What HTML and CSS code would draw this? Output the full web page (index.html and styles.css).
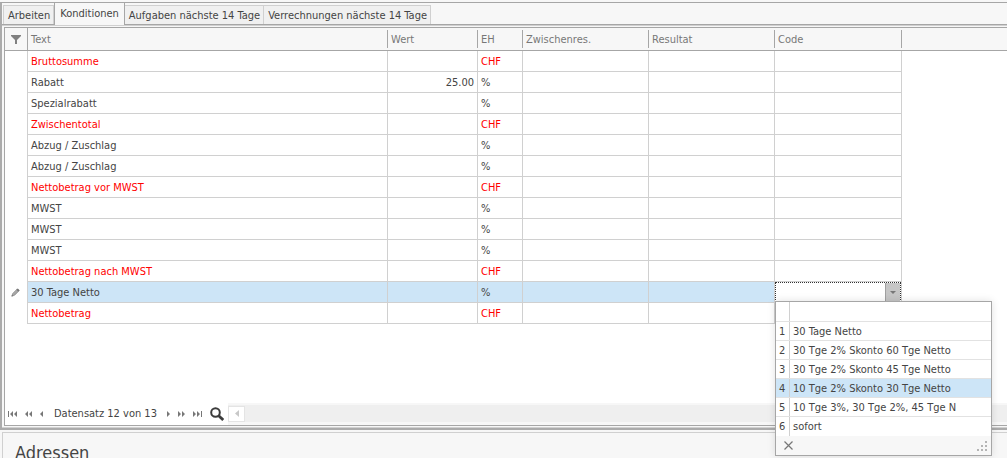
FILE: index.html
```html
<!DOCTYPE html>
<html lang="de">
<head>
<meta charset="utf-8">
<title>Konditionen</title>
<link rel="stylesheet" href="styles.css">
</head>
<body>
<main class="tab-control">
  <div class="tabs" role="tablist">
    <button class="tab" role="tab">Arbeiten</button>
    <button class="tab tab-active" role="tab" aria-selected="true">Konditionen</button>
    <button class="tab" role="tab">Aufgaben nächste 14 Tage</button>
    <button class="tab" role="tab">Verrechnungen nächste 14 Tage</button>
  </div>
  <div class="page">
    <section class="grid">
      <div class="grid-body">
        <table class="records">
          <colgroup>
            <col class="col-mark"><col class="col-text"><col class="col-wert"><col class="col-eh"><col class="col-mid"><col class="col-mid"><col class="col-code"><col>
          </colgroup>
          <thead>
            <tr>
              <th class="mark"><svg class="icon" width="10" height="9" viewBox="0 0 10 9" aria-label="Filter"><path fill="#808080" d="M0 0h10v1L6 5v4H4V5L0 1z"/></svg></th>
              <th>Text</th><th>Wert</th><th>EH</th><th>Zwischenres.</th><th>Resultat</th><th>Code</th><th></th>
            </tr>
          </thead>
          <tbody>
            <tr class="total"><td></td><td>Bruttosumme</td><td></td><td>CHF</td><td></td><td></td><td></td><td></td></tr>
            <tr><td></td><td>Rabatt</td><td class="number">25.00</td><td>%</td><td></td><td></td><td></td><td></td></tr>
            <tr><td></td><td>Spezialrabatt</td><td></td><td>%</td><td></td><td></td><td></td><td></td></tr>
            <tr class="total"><td></td><td>Zwischentotal</td><td></td><td>CHF</td><td></td><td></td><td></td><td></td></tr>
            <tr><td></td><td>Abzug / Zuschlag</td><td></td><td>%</td><td></td><td></td><td></td><td></td></tr>
            <tr><td></td><td>Abzug / Zuschlag</td><td></td><td>%</td><td></td><td></td><td></td><td></td></tr>
            <tr class="total"><td></td><td>Nettobetrag vor MWST</td><td></td><td>CHF</td><td></td><td></td><td></td><td></td></tr>
            <tr><td></td><td>MWST</td><td></td><td>%</td><td></td><td></td><td></td><td></td></tr>
            <tr><td></td><td>MWST</td><td></td><td>%</td><td></td><td></td><td></td><td></td></tr>
            <tr><td></td><td>MWST</td><td></td><td>%</td><td></td><td></td><td></td><td></td></tr>
            <tr class="total"><td></td><td>Nettobetrag nach MWST</td><td></td><td>CHF</td><td></td><td></td><td></td><td></td></tr>
            <tr class="current">
              <td class="mark"><svg class="icon" width="9" height="9" viewBox="0 0 10 10" aria-label="Bearbeiten"><path fill="#a8a8a8" stroke="#858585" stroke-width=".8" d="M1 9l1-3 5-5 2 2-5 5z"/><path fill="#777" d="M6 2l1.500-1.500L9.500 2.500 8 4zM0.500 9.500l.7-2 1.300 1.300z"/></svg></td>
              <td>30 Tage Netto</td><td></td><td>%</td><td></td><td></td>
              <td class="edit-cell">
                <div class="editor">
                  <input class="editor-input" type="text" role="combobox" aria-label="Code" aria-expanded="true" aria-controls="codes">
                  <button class="editor-button" aria-label="Liste öffnen"><svg width="6" height="3" viewBox="0 0 6 3"><path fill="#777" d="M0 0h6L3 3z"/></svg></button>
                </div>
                <div class="popup">
                  <ul class="options" id="codes" role="listbox" aria-label="Code">
                    <li class="option option-head"><span class="option-key"></span><span class="option-text"></span></li>
                    <li class="option" role="option"><span class="option-key">1</span><span class="option-text">30 Tage Netto</span></li>
                    <li class="option" role="option"><span class="option-key">2</span><span class="option-text">30 Tge 2% Skonto 60 Tge Netto</span></li>
                    <li class="option" role="option"><span class="option-key">3</span><span class="option-text">30 Tge 2% Skonto 45 Tge Netto</span></li>
                    <li class="option option-active" role="option" aria-selected="true"><span class="option-key">4</span><span class="option-text">10 Tge 2% Skonto 30 Tge Netto</span></li>
                    <li class="option" role="option"><span class="option-key">5</span><span class="option-text">10 Tge 3%, 30 Tge 2%, 45 Tge N</span></li>
                    <li class="option" role="option"><span class="option-key">6</span><span class="option-text">sofort</span></li>
                  </ul>
                  <div class="popup-footer">
                    <button class="plain" aria-label="Schliessen"><svg class="icon" width="9" height="9" viewBox="0 0 9 9"><path stroke="#777" stroke-width="1.200" d="M.5.5l8 8M8.500.5l-8 8"/></svg></button>
                    <svg class="icon" width="10" height="10" viewBox="0 0 10 10"><path fill="#b4b4b4" d="M8 0h2v2H8zM4 4h2v2H4zM8 4h2v2H8zM0 8h2v2H0zM4 8h2v2H4zM8 8h2v2H8z"/></svg>
                  </div>
                </div>
              </td>
              <td></td>
            </tr>
            <tr class="total"><td></td><td>Nettobetrag</td><td></td><td>CHF</td><td></td><td></td><td></td><td></td></tr>
          </tbody>
        </table>
      </div>
      <footer class="grid-footer">
        <nav class="navigator">
          <button class="nav-button" aria-label="Erster"><svg class="icon" width="10" height="6" viewBox="0 0 10 6"><path fill="#777" d="M0 0h1v6H0zM5 0v6L2 3zM9 0v6L6 3z"/></svg></button>
          <button class="nav-button" aria-label="Seite zurück"><svg class="icon" width="8" height="6" viewBox="0 0 8 6"><path fill="#777" d="M3 0v6L0 3zM7 0v6L4 3z"/></svg></button>
          <button class="nav-button" aria-label="Zurück"><svg class="icon" width="4" height="6" viewBox="0 0 4 6"><path fill="#777" d="M3 0v6L0 3z"/></svg></button>
          <span class="position">Datensatz 12 von 13</span>
          <button class="nav-button" aria-label="Weiter"><svg class="icon" width="4" height="6" viewBox="0 0 4 6"><path fill="#777" d="M0 0v6l3-3z"/></svg></button>
          <button class="nav-button" aria-label="Seite weiter"><svg class="icon" width="8" height="6" viewBox="0 0 8 6"><path fill="#777" d="M0 0v6l3-3zM4 0v6l3-3z"/></svg></button>
          <button class="nav-button" aria-label="Letzter"><svg class="icon" width="10" height="6" viewBox="0 0 10 6"><path fill="#777" d="M0 0v6l3-3zM4 0v6l3-3zM8 0h1v6H8z"/></svg></button>
          <button class="nav-search" aria-label="Suchen"><svg class="icon" width="14" height="14" viewBox="0 0 14 14"><circle cx="5.500" cy="5.500" r="4.300" fill="none" stroke="#3c3c3c" stroke-width="2"/><path stroke="#3c3c3c" stroke-width="2.800" d="M8.700 8.700l4.500 4.300"/></svg></button>
        </nav>
        <div class="scrollbar">
          <button class="scroll-button" aria-label="Nach links"><svg class="icon" width="4" height="7" viewBox="0 0 4 7"><path fill="#c8c8c8" d="M4 0v7L0 3.500z"/></svg></button>
        </div>
      </footer>
    </section>
  </div>
</main>
<section class="addresses">
  <h2 class="addresses-title">Adressen</h2>
</section>
</body>
</html>
```
FILE: styles.css
```css
* { box-sizing: border-box; }

body {
  margin: 0;
  height: 100vh;
  overflow: hidden;
  display: flex;
  flex-direction: column;
  background: #f7f7f7;
  color: #444;
  font: 11px/14px "DejaVu Sans Condensed", "Noto Sans", sans-serif;
}

button, input {
  font: inherit;
  color: inherit;
  border: 0;
  border-radius: 0;
  padding: 0;
  background: none;
}

.icon { display: block; }

/* Tabs */
.tab-control {
  flex: 1;
  display: flex;
  flex-direction: column;
  margin-top: 2px;
  border-top: 1px solid #a6a6a6;
  border-left: 2px solid #ababab;
  border-bottom: 2px solid #ababab;
}

.tabs {
  display: flex;
  align-items: flex-end;
  height: 21px;
  padding-left: 1px;
}

.tab {
  height: 19px;
  padding: 1px 3px 0 4px;
  white-space: nowrap;
  background: #f0f0f0;
  border: 1px solid #d0d0d0;
  border-bottom: 0;
}

.tab + .tab { border-left-width: 0; }

.tab.tab-active {
  position: relative;
  height: 22px;
  margin-bottom: -1px;
  padding: 0 5px 1px;
  background: #f7f7f7;
  border: solid #a6a6a6;
  border-width: 0 1px;
}

.page {
  flex: 1;
  display: flex;
  border-top: 1px solid #a6a6a6;
  border-bottom: 1px solid #d0d0d0;
  box-shadow: inset 0 1px #d0d0d0;
  padding: 2px 0 1px 2px;
}

/* Grid */
.grid {
  flex: 1;
  min-width: 0;
  display: flex;
  flex-direction: column;
  border: 1px solid #a6a6a6;
  border-right: 0;
  background: #fff;
}

.grid-body { flex: 1; }

.records {
  width: 100%;
  table-layout: fixed;
  border-collapse: separate;
  border-spacing: 0;
}

.col-mark { width: 23px; }
.col-text { width: 360px; }
.col-wert { width: 90px; }
.col-eh { width: 45px; }
.col-mid { width: 126px; }
.col-code { width: 127px; }

.records th {
  position: relative;
  height: 23px;
  padding: 2px 3px 0;
  text-align: left;
  font-weight: normal;
  color: #777;
  background: #f7f7f7;
  border-bottom: 1px solid #a6a6a6;
}

.records th:not(:last-child)::after {
  content: "";
  position: absolute;
  top: 2px;
  bottom: 2px;
  right: 0;
  width: 1px;
  background: #a6a6a6;
}

.records th:first-child::after { top: 0; bottom: 0; }

.records td {
  height: 21px;
  padding: 2px 3px 0;
  white-space: nowrap;
  border-right: 1px solid #d0d0d0;
  border-bottom: 1px solid #d0d0d0;
}

.records td:first-child { border-bottom: 0; }
.records td:last-child { border: 0; }
.records .mark { padding: 0 0 0 6px; }
.records .number { text-align: right; }
.total { color: #f00; }
.current td:not(:first-child):not(:last-child):not(.edit-cell) { background: #cde5f7; }

/* Code editor */
.records .current .edit-cell {
  position: relative;
  padding: 0;
}

.editor {
  display: flex;
  height: 20px;
  border: 1px dotted #333;
}

.editor-input {
  flex: 1;
  min-width: 0;
  padding: 0 3px;
  outline: 0;
}

.editor-button {
  width: 15px;
  display: grid;
  place-items: center;
  background: #c6c6c6;
  border-left: 1px solid #a0a0a0;
}

.popup {
  position: absolute;
  z-index: 2;
  top: 19px;
  left: 0;
  width: 217px;
  background: #fff;
  border: 1px solid #a6a6a6;
  box-shadow: 0 0 8px rgb(0 0 0 / 12%);
}

.options {
  margin: 0;
  padding: 0;
  list-style: none;
}

.option {
  display: flex;
  height: 19px;
  line-height: 20px;
  border-bottom: 1px solid #e2e2e2;
}

.option-head { height: 20px; }
.option:last-child { border-bottom: 0; }
.option-active { background: #cde5f7; }

.option-key {
  width: 14px;
  padding-left: 3px;
  border-right: 1px solid #d0d0d0;
}

.option-text { padding-left: 3px; }

.popup-footer {
  display: flex;
  justify-content: space-between;
  align-items: center;
  height: 19px;
  padding: 0 4px 0 8px;
  background: #f7f7f7;
}

/* Record navigator */
.grid-footer {
  display: flex;
  height: 22px;
}

.navigator {
  display: flex;
  align-items: center;
  justify-content: space-between;
  width: 223px;
  padding: 0 4px 0 3px;
}

.nav-button {
  display: grid;
  place-items: center;
}

.position {
  padding: 0 3px;
  white-space: nowrap;
}

.scrollbar {
  flex: 1;
  display: flex;
  align-items: center;
  background: #efefef;
  border: solid #f7f7f7;
  border-width: 2px 0 3px;
}

.scroll-button {
  width: 17px;
  height: 16px;
  display: grid;
  place-items: center;
  background: #fff;
  border: 1px solid #e4e4e4;
}

/* Addresses */
.addresses {
  flex: none;
  height: 26px;
  margin: 2px 0 0 2px;
  padding: 9px 12px 0;
  border: solid #d0d0d0;
  border-width: 1px 0 0 1px;
}

.addresses-title {
  margin: 0;
  font-size: 18px;
  line-height: 22px;
  font-weight: normal;
}
```
